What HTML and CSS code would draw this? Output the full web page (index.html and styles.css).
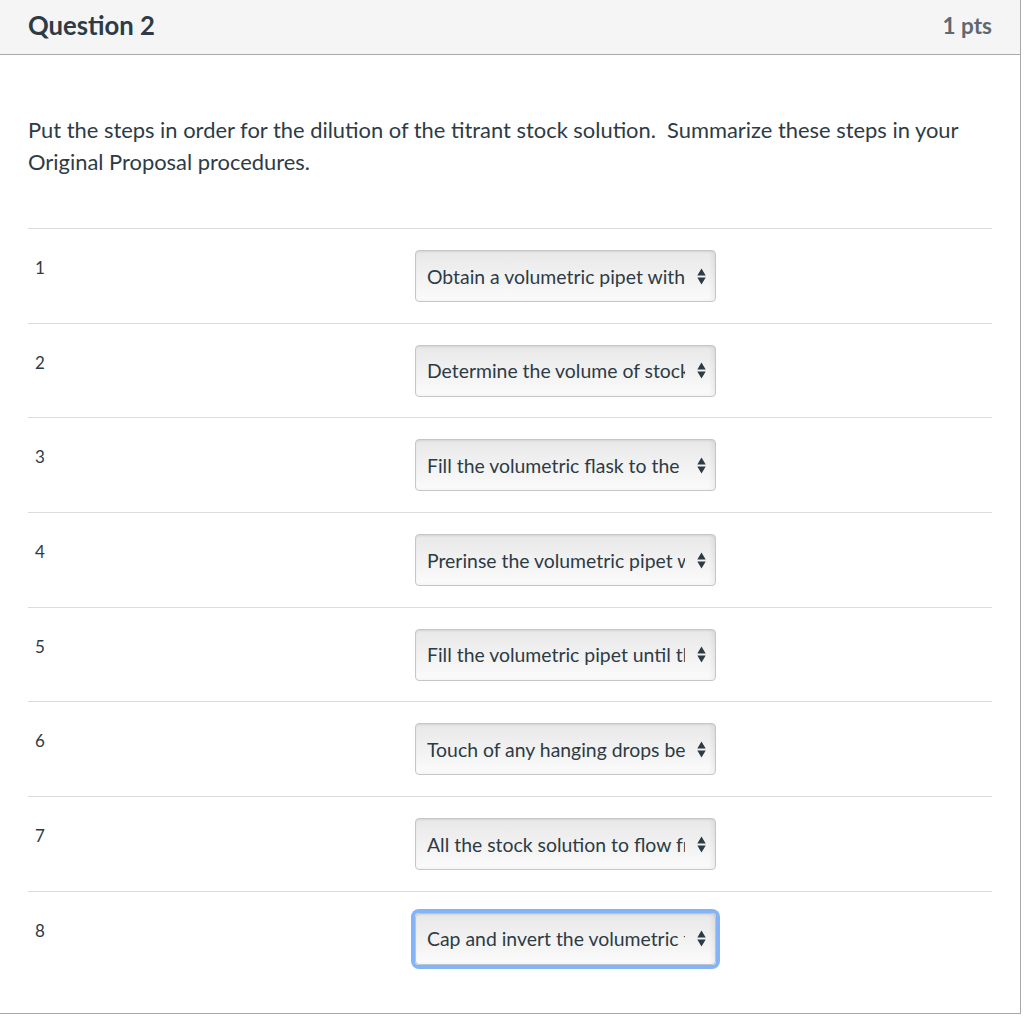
FILE: index.html
```html
<!DOCTYPE html>
<html lang="en">
<head>
<meta charset="utf-8">
<title>Question 2</title>
<link rel="stylesheet" href="styles.css">
</head>
<body>
<div class="quiz">
  <div class="header">
    <span class="title">Question 2</span>
    <span class="pts">1 pts</span>
  </div>
  <div class="body">
    <p class="text">Put the steps in order for the dilution of the titrant stock solution.&nbsp; Summarize these steps in your Original Proposal procedures.</p>
    <div class="table">
      <div class="row"><div class="num">1</div><div class="cell"><div class="sel"><span class="val">Obtain a volumetric pipet with the correct volume</span><span class="arr"><svg width="9" height="17" viewBox="0 0 9 17"><path d="M4.5 0.5 L8.7 7.5 H0.3 Z M0.3 9.5 H8.7 L4.5 16.5 Z" fill="#2d3b45"/></svg></span></div></div></div>
      <div class="row"><div class="num">2</div><div class="cell"><div class="sel"><span class="val">Determine the volume of stock solution needed</span><span class="arr"><svg width="9" height="17" viewBox="0 0 9 17"><path d="M4.5 0.5 L8.7 7.5 H0.3 Z M0.3 9.5 H8.7 L4.5 16.5 Z" fill="#2d3b45"/></svg></span></div></div></div>
      <div class="row"><div class="num">3</div><div class="cell"><div class="sel"><span class="val">Fill the volumetric flask to the mark</span><span class="arr"><svg width="9" height="17" viewBox="0 0 9 17"><path d="M4.5 0.5 L8.7 7.5 H0.3 Z M0.3 9.5 H8.7 L4.5 16.5 Z" fill="#2d3b45"/></svg></span></div></div></div>
      <div class="row"><div class="num">4</div><div class="cell"><div class="sel"><span class="val">Prerinse the volumetric pipet with stock solution</span><span class="arr"><svg width="9" height="17" viewBox="0 0 9 17"><path d="M4.5 0.5 L8.7 7.5 H0.3 Z M0.3 9.5 H8.7 L4.5 16.5 Z" fill="#2d3b45"/></svg></span></div></div></div>
      <div class="row"><div class="num">5</div><div class="cell"><div class="sel"><span class="val">Fill the volumetric pipet until the mark</span><span class="arr"><svg width="9" height="17" viewBox="0 0 9 17"><path d="M4.5 0.5 L8.7 7.5 H0.3 Z M0.3 9.5 H8.7 L4.5 16.5 Z" fill="#2d3b45"/></svg></span></div></div></div>
      <div class="row"><div class="num">6</div><div class="cell"><div class="sel"><span class="val">Touch of any hanging drops before transfer</span><span class="arr"><svg width="9" height="17" viewBox="0 0 9 17"><path d="M4.5 0.5 L8.7 7.5 H0.3 Z M0.3 9.5 H8.7 L4.5 16.5 Z" fill="#2d3b45"/></svg></span></div></div></div>
      <div class="row"><div class="num">7</div><div class="cell"><div class="sel"><span class="val">All the stock solution to flow from the pipet</span><span class="arr"><svg width="9" height="17" viewBox="0 0 9 17"><path d="M4.5 0.5 L8.7 7.5 H0.3 Z M0.3 9.5 H8.7 L4.5 16.5 Z" fill="#2d3b45"/></svg></span></div></div></div>
      <div class="row"><div class="num">8</div><div class="cell"><div class="sel focus"><span class="val">Cap and invert the volumetric flask to mix</span><span class="arr"><svg width="9" height="17" viewBox="0 0 9 17"><path d="M4.5 0.5 L8.7 7.5 H0.3 Z M0.3 9.5 H8.7 L4.5 16.5 Z" fill="#2d3b45"/></svg></span></div></div></div>
    </div>
  </div>
</div>
</body>
</html>
```

FILE: styles.css
```css
html, body {
  margin: 0;
  padding: 0;
  background: #fff;
}
body {
  font-family: Lato, "Open Sans", sans-serif;
  color: #2d3b45;
}
.quiz {
  width: 1020px;
  border-right: 1px solid #a9a9a9;
  border-bottom: 1px solid #a9a9a9;
}
.header {
  height: 55px;
  background: #f5f5f5;
  border-bottom: 1px solid #aaaaaa;
  display: flex;
  align-items: center;
  justify-content: space-between;
  padding: 0 28px;
  box-sizing: border-box;
}
.title {
  font-size: 25.7px;
  font-weight: 700;
  color: #2d3b45;
  margin-top: -4px;
}
.pts {
  font-size: 22.5px;
  font-weight: 700;
  color: #5f6870;
  margin-top: -4px;
}
.body {
  padding: 59px 28px 27px 28px;
}
.text {
  margin: 0;
  font-size: 21.9px;
  line-height: 32px;
}
.table {
  margin-top: 50px;
}
.row {
  display: grid;
  grid-template-columns: 387px 1fr;
  border-top: 1px solid #dcdcdc;
  height: 94.7px;
  box-sizing: border-box;
  padding-top: 21px;
}
.num {
  padding-left: 7px;
  font-size: 17px;
  line-height: 36px;
}
.sel {
  width: 301px;
  height: 52px;
  box-sizing: border-box;
  border: 1px solid #c4c7ca;
  border-radius: 4px;
  background: linear-gradient(#e8e8e8, #fbfbfb);
  box-shadow: inset 0 1px 2px rgba(0,0,0,0.06), inset -3px 0 4px rgba(0,0,0,0.05);
  display: flex;
  align-items: center;
  padding-left: 11px;
}
.sel.focus {
  box-shadow: 0 0 0 4px #84b4f5, inset 0 1px 2px rgba(0,0,0,0.06), inset -3px 0 4px rgba(0,0,0,0.05);
  border-color: #b9c4d0;
}
.val {
  width: 258px;
  overflow: hidden;
  white-space: nowrap;
  font-size: 19.4px;
  color: #2d3b45;
  flex: none;
}
.arr {
  margin-left: 12px;
  display: flex;
  align-items: center;
}
```
